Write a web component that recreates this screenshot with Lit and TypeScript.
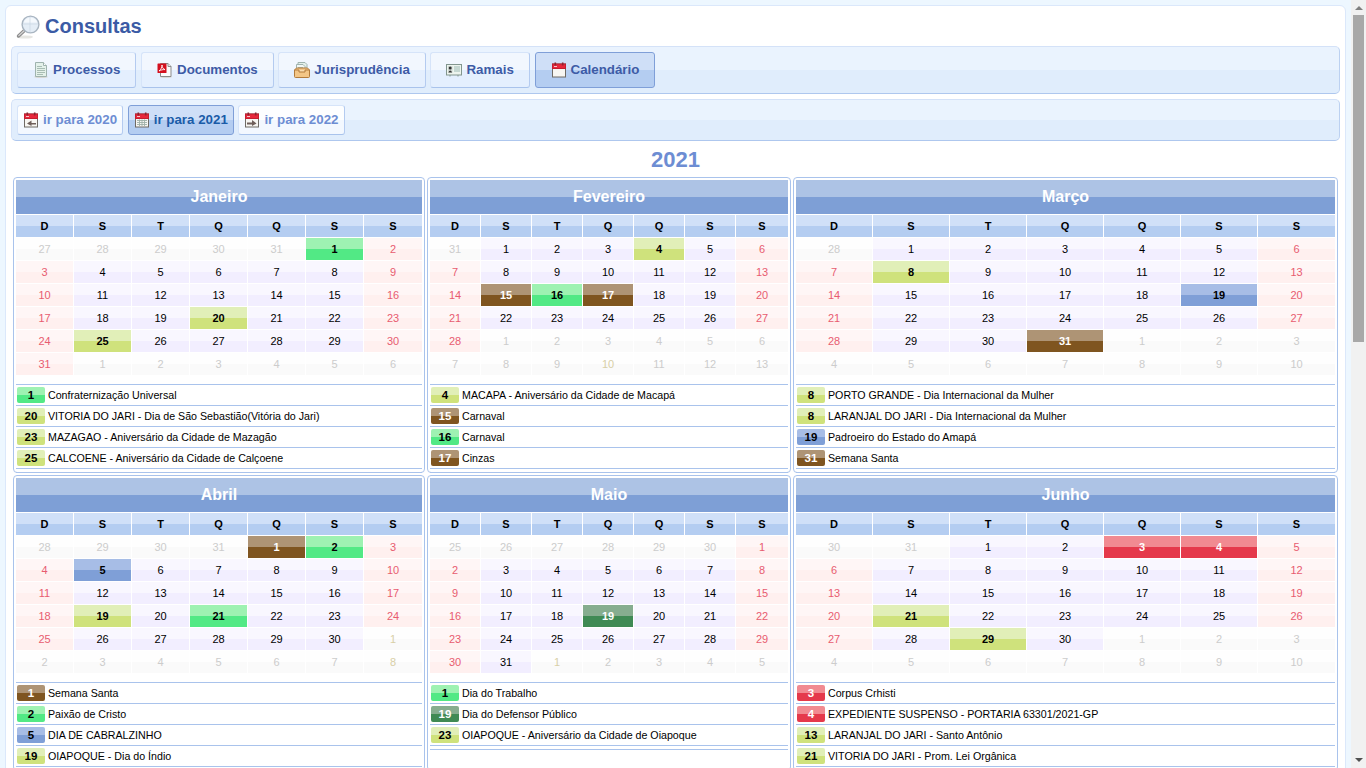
import { LitElement, css, html, svg } from "lit";
import { customElement } from "lit/decorators.js";

type Kind = "green" | "lime" | "brown" | "blue" | "forest" | "red";

interface Holiday {
  day: number;
  kind: Kind;
  text: string;
}

interface Month {
  name: string;
  holidays: Holiday[];
  // dias marcados na grade (fim de semana nao recebe cor)
  marked: Record<number, Kind>;
  tinted?: number[];
}

const YEAR = 2021;
const WEEK = ["D", "S", "T", "Q", "Q", "S", "S"];
// largura das colunas de dia, por coluna da pagina
const DAY_WIDTH = [57, 50, 76];

const MONTHS: Month[] = [
  {
    name: "Janeiro",
    marked: { 1: "green", 20: "lime", 25: "lime" },
    holidays: [
      { day: 1, kind: "green", text: "Confraternização Universal" },
      { day: 20, kind: "lime", text: "VITORIA DO JARI - Dia de São Sebastião(Vitória do Jari)" },
      { day: 23, kind: "lime", text: "MAZAGAO - Aniversário da Cidade de Mazagão" },
      { day: 25, kind: "lime", text: "CALCOENE - Aniversário da Cidade de Calçoene" },
    ],
  },
  {
    name: "Fevereiro",
    marked: { 4: "lime", 15: "brown", 16: "green", 17: "brown" },
    tinted: [10],
    holidays: [
      { day: 4, kind: "lime", text: "MACAPA - Aniversário da Cidade de Macapá" },
      { day: 15, kind: "brown", text: "Carnaval" },
      { day: 16, kind: "green", text: "Carnaval" },
      { day: 17, kind: "brown", text: "Cinzas" },
    ],
  },
  {
    name: "Março",
    marked: { 8: "lime", 19: "blue", 31: "brown" },
    holidays: [
      { day: 8, kind: "lime", text: "PORTO GRANDE - Dia Internacional da Mulher" },
      { day: 8, kind: "lime", text: "LARANJAL DO JARI - Dia Internacional da Mulher" },
      { day: 19, kind: "blue", text: "Padroeiro do Estado do Amapá" },
      { day: 31, kind: "brown", text: "Semana Santa" },
    ],
  },
  {
    name: "Abril",
    marked: { 1: "brown", 2: "green", 5: "blue", 19: "lime", 21: "green" },
    tinted: [1, 8],
    holidays: [
      { day: 1, kind: "brown", text: "Semana Santa" },
      { day: 2, kind: "green", text: "Paixão de Cristo" },
      { day: 5, kind: "blue", text: "DIA DE CABRALZINHO" },
      { day: 19, kind: "lime", text: "OIAPOQUE - Dia do Índio" },
    ],
  },
  {
    name: "Maio",
    marked: { 19: "forest" },
    tinted: [1],
    holidays: [
      { day: 1, kind: "green", text: "Dia do Trabalho" },
      { day: 19, kind: "forest", text: "Dia do Defensor Público" },
      { day: 23, kind: "lime", text: "OIAPOQUE - Aniversário da Cidade de Oiapoque" },
    ],
  },
  {
    name: "Junho",
    marked: { 3: "red", 4: "red", 21: "lime", 29: "lime" },
    holidays: [
      { day: 3, kind: "red", text: "Corpus Crhisti" },
      { day: 4, kind: "red", text: "EXPEDIENTE SUSPENSO - PORTARIA 63301/2021-GP" },
      { day: 13, kind: "lime", text: "LARANJAL DO JARI - Santo Antônio" },
      { day: 21, kind: "lime", text: "VITORIA DO JARI - Prom. Lei Orgânica" },
    ],
  },
];

const calendarIcon = (inner: unknown = svg``) => html`
  <svg class="ico" viewBox="0 0 16 16" width="16" height="16">
    <rect x="1.5" y="2" width="13" height="13" fill="#f7f6f2" stroke="#6f6a64" stroke-width="1" />
    <rect x="1.5" y="2" width="13" height="4.5" fill="#e8283c" stroke="#c41e30" stroke-width="1" />
    <rect x="3.5" y="0.5" width="1.6" height="3" fill="#8e2430" />
    <rect x="10.9" y="0.5" width="1.6" height="3" fill="#8e2430" />
    <rect x="3" y="4" width="3" height="1" fill="#f6c7cb" />
    ${inner}
  </svg>
`;

const ICONS = {
  search: html`
    <svg class="lens" viewBox="0 0 24 24" width="24" height="24">
      <ellipse cx="9" cy="22" rx="8" ry="1.6" fill="#e6e6e2" />
      <path d="M9.5 14.5 L2.5 21" stroke="#8d8d8d" stroke-width="3.4" stroke-linecap="round" />
      <path d="M9.5 14.5 L2.8 20.6" stroke="#d8d8d8" stroke-width="1.2" stroke-linecap="round" />
      <circle cx="14.5" cy="9.5" r="8.4" fill="#e4edf6" stroke="#a9b5c1" stroke-width="1.4" />
      <path d="M7.5 7.5 A7.5 7.5 0 0 1 21.5 7.5 Z" fill="#f5f9fd" />
      <path d="M14 2 V17 M7 9 H22" stroke="#c6d3e0" stroke-width="0.6" />
    </svg>
  `,
  doc: html`
    <svg class="ico" viewBox="0 0 16 16" width="16" height="16">
      <ellipse cx="8" cy="15" rx="7" ry="0.9" fill="#d8d8d4" />
      <path d="M2.5 0.5 H10.5 L13.5 3.5 V14.5 H2.5 Z" fill="#e4f1ea" stroke="#9fb3ae" />
      <path d="M10.5 0.5 V3.5 H13.5" fill="#fff" stroke="#9fb3ae" />
      <path d="M4 4.5 H9 M4 6.5 H12 M4 8.5 H12 M4 10.5 H12 M4 12.5 H10" stroke="#a8bdb4" />
    </svg>
  `,
  pdf: html`
    <svg class="ico" viewBox="0 0 16 16" width="16" height="16">
      <ellipse cx="9" cy="15" rx="6" ry="0.9" fill="#d8d8d4" />
      <path d="M3.5 1.5 H11 L14 4.5 V14.5 H3.5 Z" fill="#fbfbfb" stroke="#8b8b8b" />
      <path d="M11 1.5 V4.5 H14" fill="#e8e8e8" stroke="#8b8b8b" />
      <rect x="0.5" y="1.5" width="9" height="9.5" rx="0.6" fill="#d4101e" />
      <path d="M2 9 C4 7.5 5.2 5 5 3 C5 5 6 7 8 7.6 C6 7.4 3.8 8 2 9 Z" fill="none" stroke="#fff" stroke-width="0.9" />
    </svg>
  `,
  inbox: html`
    <svg class="ico" viewBox="0 0 16 16" width="16" height="16">
      <path d="M4 0.5 H11 L13 2.5 V8 H4 Z" fill="#e4f0ea" stroke="#9fb3ae" />
      <path d="M2.5 2.5 H9 L11 4.5 V9 H2.5 Z" fill="#f2f7f4" stroke="#9fb3ae" />
      <path d="M4 5.5 H9 M4 7 H9" stroke="#a8bdb4" />
      <path d="M0.5 8 L2.5 6 H13.5 L15.5 8 V14.5 Q15.5 15.5 14.5 15.5 H1.5 Q0.5 15.5 0.5 14.5 Z" fill="#f3c687" stroke="#b27b3c" />
      <path d="M0.5 8 H5 V10 H11 V8 H15.5" fill="#f9dcae" stroke="#b27b3c" />
    </svg>
  `,
  card: html`
    <svg class="ico" viewBox="0 0 16 16" width="16" height="16">
      <rect x="0.5" y="2.5" width="15" height="10.5" fill="#edf4ee" stroke="#82968e" />
      <rect x="2" y="4" width="4.5" height="6.5" fill="#cfd8d2" />
      <circle cx="4.2" cy="6" r="1.5" fill="#333" />
      <path d="M2.3 10.5 Q4.2 6.5 6.2 10.5 Z" fill="#333" />
      <path d="M8 5 H14 M8 7 H14 M8 9 H14" stroke="#9dbab4" />
      <path d="M4 13 V14.5 M12 13 V14.5" stroke="#82968e" />
    </svg>
  `,
  calendar: calendarIcon(),
  calPrev: calendarIcon(svg`<path d="M13 11 H8.5 V8.5 L4 11.5 L8.5 14 V12.5 H13 Z" fill="#6f5f5a" />`),
  calNext: calendarIcon(svg`<path d="M3 10.5 H8 V8 L12.5 11.5 L8 14 V12.5 H3 Z" fill="#6f5f5a" />`),
  calGrid: calendarIcon(
    svg`<path d="M3 8.5 H13 M3 10.5 H13 M3 12.5 H13 M5.5 7.5 V14 M8 7.5 V14 M10.5 7.5 V14" stroke="#9fb0a8" stroke-width="0.9" />`
  ),
};

const TABS = [
  { label: "Processos", icon: ICONS.doc },
  { label: "Documentos", icon: ICONS.pdf },
  { label: "Jurisprudência", icon: ICONS.inbox },
  { label: "Ramais", icon: ICONS.card },
  { label: "Calendário", icon: ICONS.calendar, active: true },
];

const YEARS = [
  { label: "ir para 2020", icon: ICONS.calPrev },
  { label: "ir para 2021", icon: ICONS.calGrid, active: true },
  { label: "ir para 2022", icon: ICONS.calNext },
];

@customElement("month-card")
export class MonthCard extends LitElement {
  static properties = {
    month: { attribute: false },
    index: { type: Number },
  };

  declare month: Month;
  declare index: number;

  getCells() {
    const first = new Date(YEAR, this.index, 1);
    const start = new Date(YEAR, this.index, 1 - first.getDay());
    const cells = [];
    for (let i = 0; i < 42; i++) {
      const d = new Date(start.getFullYear(), start.getMonth(), start.getDate() + i);
      const inMonth = d.getMonth() === this.index;
      const weekend = d.getDay() === 0 || d.getDay() === 6;
      const after = d.getMonth() > this.index;
      let cls = "off";
      if (inMonth) cls = weekend ? "weekend" : "work";
      else if (after && this.month.tinted?.includes(d.getDate())) cls = "off tinted";
      const mark = inMonth ? this.month.marked[d.getDate()] : undefined;
      cells.push({ day: d.getDate(), cls: mark ?? cls, strong: !!mark });
    }
    return cells;
  }

  render() {
    const width = DAY_WIDTH[this.index % 3];
    return html`
      <div class="title">${this.month.name}</div>
      <div class="grid" style="grid-template-columns: repeat(6, ${width}px) 1fr">
        ${WEEK.map((w) => html`<div class="head">${w}</div>`)}
        ${this.getCells().map(
          (c) => html`<div class="day ${c.cls} ${c.strong ? "strong" : ""}">${c.day}</div>`
        )}
      </div>
      <ul class="list">
        ${this.month.holidays.map(
          (h) => html`
            <li>
              <span class="badge ${h.kind}">${h.day}</span>
              <span class="desc">${h.text}</span>
            </li>
          `
        )}
      </ul>
    `;
  }

  static styles = css`
    :host {
      display: block;
      border: 1px solid #a9c3ec;
      border-radius: 4px;
      padding: 2px;
      background: #fff;
      font-family: "Liberation Sans", Arial, sans-serif;
      min-width: 0;
    }
    .title {
      height: 34px;
      line-height: 34px;
      text-align: center;
      font-size: 16px;
      font-weight: bold;
      color: #fff;
      background: linear-gradient(#adc3e5 50%, #7e9fd6 50%);
    }
    .grid {
      display: grid;
      grid-auto-rows: 22px;
      gap: 1px;
      margin-top: 1px;
    }
    .head {
      line-height: 22px;
      text-align: center;
      font-size: 11px;
      font-weight: bold;
      color: #000;
      background: linear-gradient(#d0e0f8 50%, #b4cdf1 50%);
    }
    .day {
      line-height: 22px;
      text-align: center;
      font-size: 11px;
      color: #000;
    }
    .strong {
      font-weight: bold;
    }
    .off {
      color: #ccc;
      background: linear-gradient(#fefefe 50%, #fafafa 50%);
    }
    .off.tinted {
      color: #d8cfa6;
    }
    .work {
      background: linear-gradient(#f9f7ff 50%, #f2eeff 50%);
    }
    .weekend {
      color: #e85c70;
      background: linear-gradient(#fff6f6 50%, #fff0ef 50%);
    }
    .green {
      background: linear-gradient(#9ef2b2 50%, #52e985 50%);
    }
    .lime {
      background: linear-gradient(#e1efb8 50%, #cfe27c 50%);
    }
    .brown {
      color: #fff;
      background: linear-gradient(#ae9475 50%, #7f5520 50%);
    }
    .blue {
      background: linear-gradient(#a7bde6 50%, #7f9fd7 50%);
    }
    .forest {
      color: #fff;
      background: linear-gradient(#86ad8f 50%, #3f8a54 50%);
    }
    .red {
      color: #fff;
      background: linear-gradient(#f18a91 50%, #e5394b 50%);
    }
    .list {
      list-style: none;
      margin: 9px 0 -3px;
      padding: 0 0 3px;
      border-top: 1px solid #a9c3ec;
      border-bottom: 1px solid #a9c3ec;
    }
    .list li {
      display: flex;
      align-items: center;
      gap: 3px;
      height: 20px;
      padding-left: 1px;
      border-bottom: 1px solid #a9c3ec;
      font-size: 10.67px;
      color: #000;
      white-space: nowrap;
    }
    .badge {
      flex: none;
      width: 28px;
      height: 16px;
      line-height: 16px;
      border-radius: 2px;
      text-align: center;
      font-weight: bold;
      font-size: 11.5px;
    }
  `;
}

@customElement("app-root")
export class AppRoot extends LitElement {
  render() {
    return html`
      <div class="page">
        <div class="panel">
          <h1>${ICONS.search}<span>Consultas</span></h1>
          <nav class="bar tabs">
            ${TABS.map(
              (t) => html`<a class="btn ${t.active ? "active" : ""}">${t.icon}<span>${t.label}</span></a>`
            )}
          </nav>
          <nav class="bar years">
            ${YEARS.map(
              (y) => html`<a class="btn ${y.active ? "active" : ""}">${y.icon}<span>${y.label}</span></a>`
            )}
          </nav>
          <div class="year">${YEAR}</div>
          <div class="months">
            ${MONTHS.map((m, i) => html`<month-card .month=${m} .index=${i}></month-card>`)}
          </div>
        </div>
      </div>
      <div class="scrollbar">
        <i class="up"></i>
        <i class="thumb"></i>
        <i class="down"></i>
      </div>
    `;
  }

  static styles = css`
    :host {
      display: flex;
      height: 768px;
      overflow: hidden;
      font-family: "Liberation Sans", Arial, sans-serif;
      background: #edf7ff;
    }
    .page {
      flex: 1;
      min-width: 0;
      height: 768px;
      overflow: hidden;
      padding: 5px 5px 0;
      box-sizing: border-box;
    }
    .panel {
      height: 900px;
      box-sizing: border-box;
      background: #fff;
      border: 1px solid #dbe8fb;
      border-radius: 6px;
      padding: 7px 5px 0;
    }
    h1 {
      display: flex;
      align-items: center;
      gap: 5px;
      margin: 0 0 6px 5px;
      height: 27px;
      font-size: 20px;
      font-weight: bold;
      color: #3b5ba5;
    }
    .bar {
      display: flex;
      padding: 5px;
      box-sizing: border-box;
      border: 1px solid #d4e2f8;
      border-bottom-color: #aec7ee;
      border-right-color: #bcd1f1;
      border-radius: 5px;
      background: linear-gradient(#eaf3fe 50%, #e0edfc 50%);
    }
    .tabs {
      height: 48px;
      gap: 4.6px;
    }
    .years {
      height: 42px;
      margin-top: 5px;
      gap: 4.6px;
    }
    .btn {
      display: flex;
      align-items: center;
      gap: 4px;
      box-sizing: border-box;
      border: 1px solid #d6e4f9;
      border-right-color: #b4cbf0;
      border-bottom-color: #a9c3ec;
      border-radius: 3px;
      font-size: 13.33px;
      font-weight: bold;
      white-space: nowrap;
    }
    .btn span {
      padding-bottom: 2px;
    }
    .tabs .btn {
      height: 36px;
      padding: 0 15px;
      color: #3d5ba6;
      background: linear-gradient(#f2f7fe 50%, #e4effe 50%);
    }
    .years .btn {
      height: 30px;
      padding: 0 5px;
      color: #6d8dd3;
      background: linear-gradient(#fdfeff 50%, #f3f8ff 50%);
    }
    .tabs .btn.active,
    .years .btn.active {
      border-color: #7f9fd8;
      background: linear-gradient(#cfdff7 50%, #b4cdf1 50%);
    }
    .years .btn.active {
      color: #1a5ca8;
    }
    .ico,
    .lens {
      flex: none;
      display: block;
    }
    .year {
      height: 36px;
      line-height: 38px;
      text-align: center;
      font-size: 22px;
      font-weight: bold;
      color: #6d8dd3;
    }
    .months {
      display: grid;
      grid-template-columns: 412px 364px 545px;
      gap: 2px;
      margin-left: 2px;
      align-items: stretch;
    }
    .scrollbar {
      flex: none;
      width: 15px;
      height: 768px;
      display: flex;
      flex-direction: column;
      align-items: center;
      background: #f1f1f1;
    }
    .up,
    .down {
      width: 0;
      height: 0;
      border-left: 4px solid transparent;
      border-right: 4px solid transparent;
    }
    .up {
      margin-top: 6px;
      border-bottom: 4px solid #7f7f7f;
    }
    .down {
      margin-top: 416px;
      border-top: 4px solid #505050;
    }
    .thumb {
      width: 11px;
      height: 327px;
      margin-top: 5px;
      background: #a8a8a8;
    }
  `;
}
